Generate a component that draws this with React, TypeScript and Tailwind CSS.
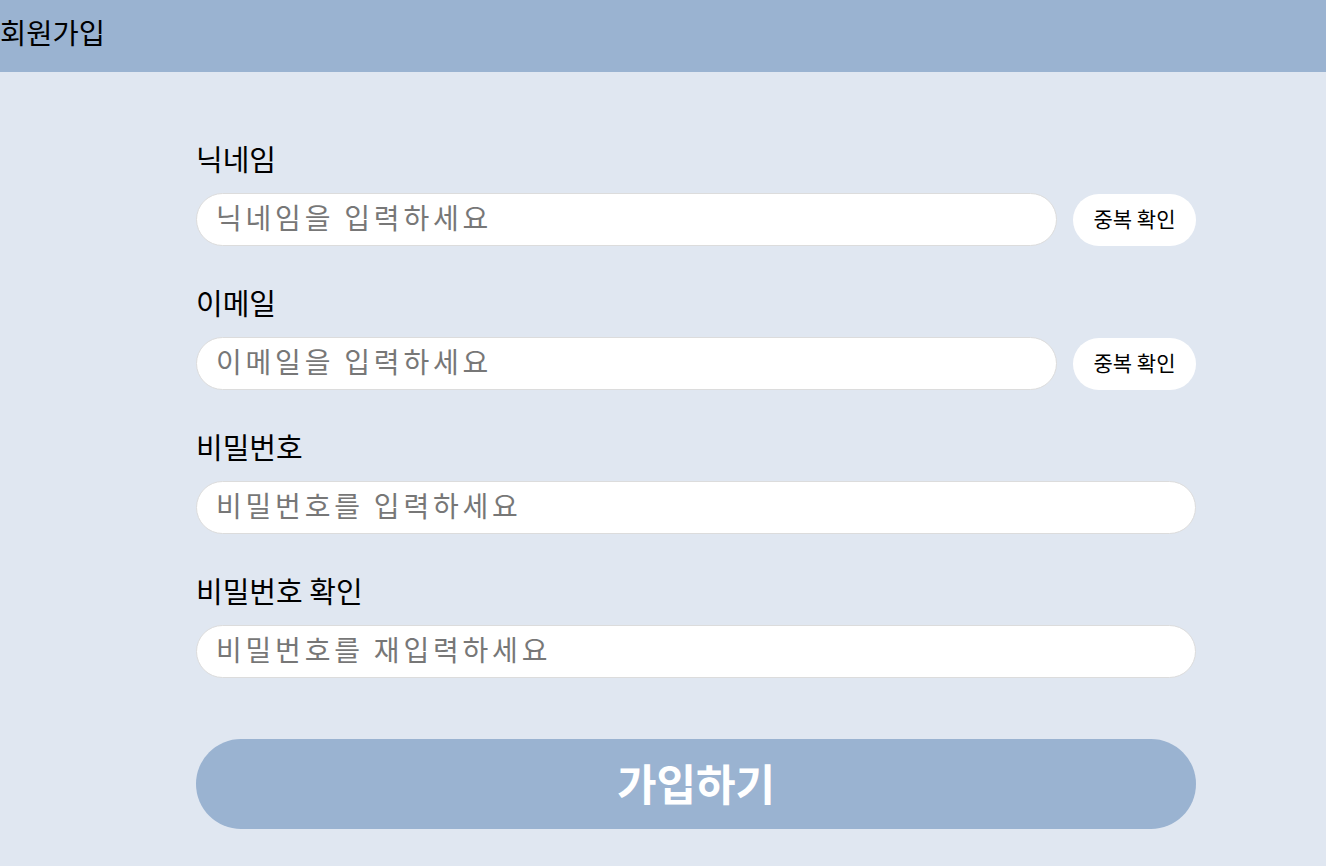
import React from "react";

const font = { fontFamily: '"Noto Sans CJK KR", "Noto Sans", sans-serif' };

function Field({ label, placeholder, check }: { label: string; placeholder: string; check?: boolean }) {
  return (
    <div className="flex flex-col">
      <label className="text-[29px] leading-[34px] text-black">{label}</label>
      <div className="mt-[18px] flex items-center gap-4">
        <input
          placeholder={placeholder}
          className="h-[53px] flex-1 rounded-full border border-[#dcdcdc] bg-white px-[19px] pb-[5px] text-[28px] tracking-[3.8px] text-black outline-none placeholder:text-[#777777]"
          style={font}
        />
        {check && (
          <button
            className="h-[52px] w-[123px] shrink-0 rounded-full bg-white pb-[2px] text-[21px] text-black"
            style={font}
          >
            중복 확인
          </button>
        )}
      </div>
    </div>
  );
}

export default function App() {
  return (
    <div className="min-h-[866px] bg-[#e0e7f1]" style={font}>
      <header className="flex h-[72px] items-center bg-[#9ab3d1] pb-[9px]">
        <h1 className="text-[28.5px] leading-[36px] text-black">회원가입</h1>
      </header>
      <main className="ml-[196px] w-[1000px] pt-[69px]">
        <div className="flex flex-col gap-[39px]">
          <Field label="닉네임" placeholder="닉네임을 입력하세요" check />
          <Field label="이메일" placeholder="이메일을 입력하세요" check />
          <Field label="비밀번호" placeholder="비밀번호를 입력하세요" />
          <Field label="비밀번호 확인" placeholder="비밀번호를 재입력하세요" />
        </div>
        <button
          className="mt-[61px] h-[90px] w-full rounded-full bg-[#9ab3d1] pb-[4px] text-[43px] font-bold text-white"
          style={font}
        >
          가입하기
        </button>
      </main>
    </div>
  );
}
